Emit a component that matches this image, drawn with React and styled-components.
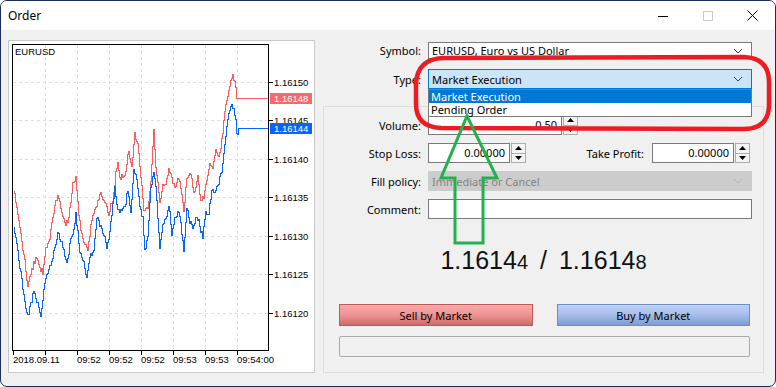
import React from 'react'
import styled, { createGlobalStyle } from 'styled-components'

const GlobalStyle = createGlobalStyle`
html, body {
  margin: 0;
  padding: 0;
  background: #fff;
}
body {
  font-family: 'Noto Sans', 'Liberation Sans', sans-serif;
  font-size: 11px;
  color: #000;
}
`;

const Window = styled.div`
position: relative;
width: 776px;
height: 387px;
box-sizing: border-box;
border: 1px solid #1c2c5b;
border-radius: 7px;
overflow: hidden;
background: #f0f0f0;
display: flex;
flex-direction: column;
`;

const TitleBar = styled.div`
height: 29px;
background: #fff;
display: flex;
align-items: center;
padding-left: 7px;
font-size: 12px;
`;

const Title = styled.div`
flex: 1;
`;

const WinBtn = styled.div`
width: 45px;
height: 29px;
display: flex;
align-items: center;
justify-content: center;
`;

const Body = styled.div`
display: flex;
gap: 8px;
padding: 10px 0 0 7px;
`;

const ChartFrame = styled.div`
width: 307px;
height: 333px;
box-sizing: border-box;
border: 1px solid #c8c8c8;
background: #fff;
overflow: hidden;
`;

const RightCol = styled.div`
width: 441px;
display: flex;
flex-direction: column;
padding-top: 2px;
`;

const FormRow = styled.div`
display: grid;
grid-template-columns: ${p => p.$label || 98}px 324px;
column-gap: 7px;
align-items: center;
height: ${p => p.$h || 20}px;
margin-top: ${p => p.$mt || 0}px;
`;

const Label = styled.div`
text-align: right;
white-space: nowrap;
`;

const Combo = styled.div`
position: relative;
height: ${p => p.$h || 20}px;
box-sizing: border-box;
border: 1px solid ${p => p.$focus ? '#0078d7' : p.$disabled ? '#cccccc' : '#7a7a7a'};
background: ${p => p.$focus ? '#cce4f7' : p.$disabled ? '#cccccc' : '#fff'};
color: ${p => p.$disabled ? '#838383' : '#000'};
display: flex;
align-items: center;
padding: 0 8px 0 3px;
`;

const ComboText = styled.div`
flex: 1;
white-space: nowrap;
`;

const DropList = styled.div`
position: absolute;
left: -1px;
right: -1px;
top: 19px;
box-sizing: border-box;
border: 1px solid #7a7a7a;
background: #fff;
z-index: 2;
`;

const DropItem = styled.div`
height: 13px;
line-height: 13px;
padding-left: 2px;
background: ${p => p.$active ? '#0078d7' : '#fff'};
color: ${p => p.$active ? '#fff' : '#000'};
`;

const GroupBox = styled.div`
margin-top: 17px;
height: 267px;
box-sizing: border-box;
border: 1px solid #dcdcdc;
display: flex;
flex-direction: column;
padding-top: 8px;
`;

const Inline = styled.div`
display: flex;
align-items: center;
height: 20px;
`;

const Input = styled.div`
width: ${p => p.$w ? p.$w + 'px' : 'auto'};
flex: ${p => p.$w ? 'none' : 1};
height: 20px;
box-sizing: border-box;
border: 1px solid #7a7a7a;
background: #fff;
text-align: right;
line-height: 18px;
padding-right: 4px;
color: #000;
`;

const Spin = styled.div`
width: 15px;
height: 20px;
box-sizing: border-box;
margin-left: 1px;
border: 1px solid #adadad;
background: #f4f4f4;
display: flex;
flex-direction: column;
`;

const SpinHalf = styled.div`
flex: 1;
display: flex;
align-items: center;
justify-content: center;
& + & {
  border-top: 1px solid #adadad;
}
`;

const SideLabel = styled.div`
flex: 1;
text-align: right;
padding-right: 8px;
white-space: nowrap;
`;

const Price = styled.div`
margin-top: 26px;
height: 30px;
line-height: 30px;
text-align: center;
font-family: 'Liberation Sans', Arial, sans-serif;
font-size: 25px;
color: #111;
`;

const Small = styled.span`
font-size: 20px;
`;

const Slash = styled.span`
margin: 0 12px;
`;

const ButtonRow = styled.div`
display: flex;
gap: 24px;
margin-top: 29px;
padding: 0 13px 0 15px;
`;

const TradeButton = styled.div`
flex: 1;
height: 22px;
box-sizing: border-box;
display: flex;
align-items: center;
justify-content: center;
border: 1px solid ${p => p.$sell ? '#c05a5a' : '#6f8cc4'};
background: ${p => p.$sell
  ? 'linear-gradient(#f9a9a9, #f09696 45%, #cf6a6a)'
  : 'linear-gradient(#bcd1f7, #a9c0ee 45%, #7f9bd2)'};
`;

const Progress = styled.div`
height: 21px;
box-sizing: border-box;
margin: 10px 13px 0 15px;
border: 1px solid #a9a9a9;
border-radius: 2px;
`;

const Overlay = styled.svg`
position: absolute;
left: 0;
top: 0;
pointer-events: none;
z-index: 5;
`;

function Chevron({ color = '#444' }) {
  return (
    <svg width="10" height="6" viewBox="0 0 10 6">
      <polyline points="1,1 5,5 9,1" fill="none" stroke={color} strokeWidth="1" />
    </svg>
  )
}

function Spinner() {
  return (
    <Spin>
      <SpinHalf>
        <svg width="7" height="4" viewBox="0 0 7 4"><polygon points="0,4 3.5,0 7,4" fill="#000" /></svg>
      </SpinHalf>
      <SpinHalf>
        <svg width="7" height="4" viewBox="0 0 7 4"><polygon points="0,0 3.5,4 7,0" fill="#000" /></svg>
      </SpinHalf>
    </Spin>
  )
}

// chart data (page pixel coords), jittered to look like ticks
const redKeys = [[13,195],[16,205],[20,235],[24,262],[27,288],[30,275],[33,262],[35,258],[38,268],[42,272],[45,245],[50,230],[54,210],[57,197],[60,205],[62,213],[65,228],[68,218],[72,187],[75,174],[78,210],[80,230],[84,238],[87,243],[90,225],[93,212],[97,197],[100,190],[103,200],[106,213],[108,212],[112,200],[115,170],[117,158],[119,174],[121,174],[125,173],[128,150],[131,163],[134,128],[137,143],[140,173],[143,210],[147,210],[150,187],[153,136],[156,177],[159,203],[162,185],[165,180],[168,167],[171,177],[174,190],[177,174],[180,185],[183,212],[186,174],[190,174],[193,190],[197,174],[200,197],[203,197],[206,177],[209,167],[212,163],[215,153],[218,152],[221,137],[224,110],[227,93],[230,77],[232,75],[234,80],[236,98]]
const blueKeys = [[13,228],[16,245],[20,270],[24,303],[27,318],[30,303],[33,292],[36,303],[40,312],[43,290],[45,280],[48,270],[52,255],[57,228],[60,245],[63,250],[66,265],[69,245],[72,240],[75,213],[78,240],[82,265],[86,274],[90,255],[93,252],[96,220],[100,225],[103,235],[106,245],[110,223],[114,190],[117,210],[121,210],[124,205],[127,190],[130,210],[133,166],[136,175],[139,210],[142,220],[144,250],[147,235],[150,190],[153,174],[156,200],[159,243],[162,225],[165,222],[168,205],[171,233],[174,215],[177,210],[180,220],[183,250],[186,205],[189,220],[192,225],[196,212],[199,225],[202,235],[205,210],[208,212],[211,190],[215,187],[218,182],[221,170],[224,140],[227,120],[230,108],[233,107],[235,120],[236,137],[238,128]]

function rng(seed) {
  let a = seed
  return () => {
    a |= 0; a = (a + 0x6D2B79F5) | 0
    let t = Math.imul(a ^ (a >>> 15), 1 | a)
    t = (t + Math.imul(t ^ (t >>> 7), 61 | t)) ^ t
    return ((t ^ (t >>> 14)) >>> 0) / 4294967296
  }
}

function stepPath(keys, seed, endX) {
  const r = rng(seed)
  let d = ''
  let j = 0
  let k = 0
  const last = keys[keys.length - 1]
  for (let x = keys[0][0]; x <= last[0]; x++) {
    while (k < keys.length - 2 && keys[k + 1][0] < x) k++
    const [x0, y0] = keys[k]
    const [x1, y1] = keys[k + 1]
    const t = x1 === x0 ? 0 : Math.min(1, Math.max(0, (x - x0) / (x1 - x0)))
    j = j * 0.55 + (r() - 0.5) * 8
    let y = Math.round(y0 + (y1 - y0) * t + (x === last[0] ? 0 : j))
    if (x === keys[0][0]) d += `M${x + 0.5} ${y + 0.5}`
    else d += `H${x + 0.5}V${y + 0.5}`
  }
  d += `H${endX}`
  return d
}

const priceGrid = [[82, '1.16150'], [120, '1.16145'], [159, '1.16140'], [197, '1.16135'], [236, '1.16130'], [274, '1.16125'], [313, '1.16120']]
const timeGrid = [45, 77, 109, 141, 173, 205, 237]
const timeLabels = [[13, '2018.09.11'], [77, '09:52'], [109, '09:52'], [141, '09:52'], [173, '09:53'], [205, '09:53'], [237, '09:54:00']]

function Chart() {
  const font = "'Liberation Sans', Arial, sans-serif"
  return (
    <svg width="305" height="331" viewBox="9 41 305 331">
      {priceGrid.map(([y]) => (
        <line key={'h' + y} x1="13" x2="268" y1={y + 0.5} y2={y + 0.5} stroke="#dedede" strokeDasharray="3 3" shapeRendering="crispEdges" />
      ))}
      {timeGrid.map(x => (
        <line key={'v' + x} x1={x + 0.5} x2={x + 0.5} y1="45" y2="350" stroke="#dedede" strokeDasharray="3 3" shapeRendering="crispEdges" />
      ))}
      <path d={stepPath(redKeys, 7, 268)} fill="none" stroke="#fa5f5f" strokeWidth="1" shapeRendering="crispEdges" />
      <path d={stepPath(blueKeys, 21, 268)} fill="none" stroke="#0a64ff" strokeWidth="1" shapeRendering="crispEdges" />
      <rect x="12.5" y="44.5" width="256" height="306" fill="none" stroke="#000" shapeRendering="crispEdges" />
      {priceGrid.map(([y, t]) => (
        <g key={'p' + y}>
          <line x1="268" x2="273" y1={y + 0.5} y2={y + 0.5} stroke="#000" shapeRendering="crispEdges" />
          <text x="274" y={y + 4} fontSize="9.5" fontFamily={font} fill="#000">{t}</text>
        </g>
      ))}
      {[13, ...timeGrid].map(x => (
        <line key={'t' + x} x1={x + 0.5} x2={x + 0.5} y1="350" y2="355" stroke="#000" shapeRendering="crispEdges" />
      ))}
      {timeLabels.map(([x, t]) => (
        <text key={'l' + x + t} x={x} y="363" fontSize="9.5" fontFamily={font} fill="#000">{t}</text>
      ))}
      <rect x="270" y="93" width="42" height="11" fill="#f86a6a" />
      <text x="274" y="102" fontSize="9.5" fontFamily={font} fill="#fff">1.16148</text>
      <rect x="270" y="123" width="42" height="11" fill="#0a64f5" />
      <text x="274" y="132" fontSize="9.5" fontFamily={font} fill="#fff">1.16144</text>
      <text x="15" y="55" fontSize="9.5" fontFamily={font} fill="#000">EURUSD</text>
    </svg>
  )
}

export default function App() {
  return (
    <>
      <GlobalStyle />
      <Window>
        <TitleBar>
          <Title>Order</Title>
          <WinBtn>
            <svg width="10" height="10" viewBox="0 0 10 10"><line x1="0" x2="10" y1="5.5" y2="5.5" stroke="#000" /></svg>
          </WinBtn>
          <WinBtn>
            <svg width="10" height="10" viewBox="0 0 10 10"><rect x="0.5" y="0.5" width="9" height="9" fill="none" stroke="#c8c8c8" /></svg>
          </WinBtn>
          <WinBtn>
            <svg width="11" height="11" viewBox="0 0 11 11"><path d="M0.5 0.5L10.5 10.5M10.5 0.5L0.5 10.5" stroke="#000" strokeWidth="1" /></svg>
          </WinBtn>
        </TitleBar>
        <Body>
          <ChartFrame>
            <Chart />
          </ChartFrame>
          <RightCol>
            <FormRow $h={17}>
              <Label>Symbol:</Label>
              <Combo $h={17}>
                <ComboText>EURUSD, Euro vs US Dollar</ComboText>
                <Chevron />
              </Combo>
            </FormRow>
            <FormRow $mt={10}>
              <Label>Type:</Label>
              <Combo $focus>
                <ComboText>Market Execution</ComboText>
                <Chevron />
                <DropList>
                  <DropItem $active>Market Execution</DropItem>
                  <DropItem>Pending Order</DropItem>
                </DropList>
              </Combo>
            </FormRow>
            <GroupBox>
              <FormRow $label={97}>
                <Label>Volume:</Label>
                <Inline>
                  <Input $w={134}>0.50</Input>
                  <Spinner />
                </Inline>
              </FormRow>
              <FormRow $label={97} $mt={8}>
                <Label>Stop Loss:</Label>
                <Inline>
                  <Input $w={82}>0.00000</Input>
                  <Spinner />
                  <SideLabel>Take Profit:</SideLabel>
                  <Input $w={82}>0.00000</Input>
                  <Spinner />
                  <div style={{ width: 2 }} />
                </Inline>
              </FormRow>
              <FormRow $label={97} $mt={8}>
                <Label>Fill policy:</Label>
                <Combo $disabled>
                  <ComboText>Immediate or Cancel</ComboText>
                  <Chevron color="#b4b4b4" />
                </Combo>
              </FormRow>
              <FormRow $label={97} $mt={8}>
                <Label>Comment:</Label>
                <Input />
              </FormRow>
              <Price>
                1.1614<Small>4</Small><Slash>/</Slash>1.1614<Small>8</Small>
              </Price>
              <ButtonRow>
                <TradeButton $sell>Sell by Market</TradeButton>
                <TradeButton>Buy by Market</TradeButton>
              </ButtonRow>
              <Progress />
            </GroupBox>
          </RightCol>
        </Body>
        <Overlay width="776" height="387" viewBox="0 0 776 387">
          <path d="M442 57 L743 56 Q768 57 768 81 L768 105 Q767 128 743 128 L440 127 Q415 126 415 103 L415 83 Q416 58 442 57 Z" fill="none" stroke="#ed1c24" strokeWidth="4.5" />
          <polygon points="466,115 496,177 482,177 482,242 454,242 454,177 440,177" fill="none" stroke="#22b14c" strokeWidth="3" strokeLinejoin="miter" />
        </Overlay>
      </Window>
    </>
  )
}
